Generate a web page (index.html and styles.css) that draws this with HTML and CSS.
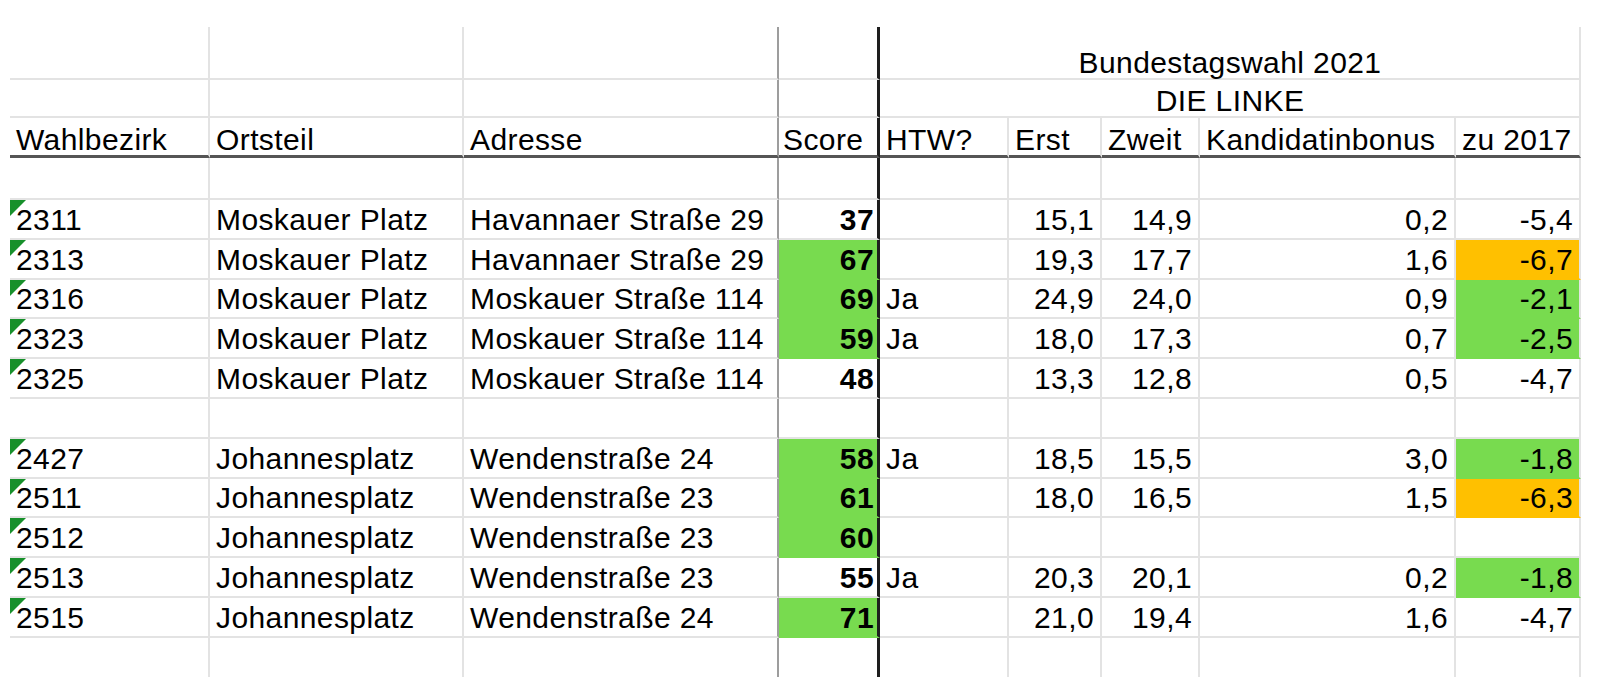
FILE: index.html
```html
<!DOCTYPE html>
<html lang="de">
<head>
<meta charset="utf-8">
<title>Bundestagswahl 2021 – DIE LINKE</title>
<link rel="stylesheet" href="styles.css">
</head>
<body>
<div class="sheet">
  <div class="row r1 top">
    <div class="c"></div><div class="c"></div><div class="c adr"></div><div class="c score"></div>
    <div class="c merged">Bundestagswahl 2021</div>
  </div>
  <div class="row r2 top">
    <div class="c"></div><div class="c"></div><div class="c adr"></div><div class="c score"></div>
    <div class="c merged">DIE LINKE</div>
  </div>
  <div class="row hdr top">
    <div class="c">Wahlbezirk</div><div class="c">Ortsteil</div><div class="c adr">Adresse</div><div class="c score sh">Score</div>
    <div class="c">HTW?</div><div class="c">Erst</div><div class="c">Zweit</div><div class="c">Kandidatinbonus</div><div class="c">zu 2017</div>
  </div>
  <div class="row">
    <div class="c"></div><div class="c"></div><div class="c adr"></div><div class="c score"></div>
    <div class="c"></div><div class="c"></div><div class="c"></div><div class="c"></div><div class="c"></div>
  </div>

  <div class="row">
    <div class="c id">2311</div><div class="c">Moskauer Platz</div><div class="c adr">Havannaer Straße 29</div><div class="c score">37</div>
    <div class="c"></div><div class="c n">15,1</div><div class="c n">14,9</div><div class="c n">0,2</div><div class="c n">-5,4</div>
  </div>
  <div class="row">
    <div class="c id">2313</div><div class="c">Moskauer Platz</div><div class="c adr">Havannaer Straße 29</div><div class="c score green">67</div>
    <div class="c"></div><div class="c n">19,3</div><div class="c n">17,7</div><div class="c n">1,6</div><div class="c n orange">-6,7</div>
  </div>
  <div class="row">
    <div class="c id">2316</div><div class="c">Moskauer Platz</div><div class="c adr">Moskauer Straße 114</div><div class="c score green">69</div>
    <div class="c">Ja</div><div class="c n">24,9</div><div class="c n">24,0</div><div class="c n">0,9</div><div class="c n green">-2,1</div>
  </div>
  <div class="row">
    <div class="c id">2323</div><div class="c">Moskauer Platz</div><div class="c adr">Moskauer Straße 114</div><div class="c score green">59</div>
    <div class="c">Ja</div><div class="c n">18,0</div><div class="c n">17,3</div><div class="c n">0,7</div><div class="c n green">-2,5</div>
  </div>
  <div class="row">
    <div class="c id">2325</div><div class="c">Moskauer Platz</div><div class="c adr">Moskauer Straße 114</div><div class="c score">48</div>
    <div class="c"></div><div class="c n">13,3</div><div class="c n">12,8</div><div class="c n">0,5</div><div class="c n">-4,7</div>
  </div>
  <div class="row">
    <div class="c"></div><div class="c"></div><div class="c adr"></div><div class="c score"></div>
    <div class="c"></div><div class="c"></div><div class="c"></div><div class="c"></div><div class="c"></div>
  </div>
  <div class="row">
    <div class="c id">2427</div><div class="c">Johannesplatz</div><div class="c adr">Wendenstraße 24</div><div class="c score green">58</div>
    <div class="c">Ja</div><div class="c n">18,5</div><div class="c n">15,5</div><div class="c n">3,0</div><div class="c n green">-1,8</div>
  </div>
  <div class="row">
    <div class="c id">2511</div><div class="c">Johannesplatz</div><div class="c adr">Wendenstraße 23</div><div class="c score green">61</div>
    <div class="c"></div><div class="c n">18,0</div><div class="c n">16,5</div><div class="c n">1,5</div><div class="c n orange">-6,3</div>
  </div>
  <div class="row">
    <div class="c id">2512</div><div class="c">Johannesplatz</div><div class="c adr">Wendenstraße 23</div><div class="c score green">60</div>
    <div class="c"></div><div class="c n"></div><div class="c n"></div><div class="c n"></div><div class="c n"></div>
  </div>
  <div class="row">
    <div class="c id">2513</div><div class="c">Johannesplatz</div><div class="c adr">Wendenstraße 23</div><div class="c score">55</div>
    <div class="c">Ja</div><div class="c n">20,3</div><div class="c n">20,1</div><div class="c n">0,2</div><div class="c n green">-1,8</div>
  </div>
  <div class="row">
    <div class="c id">2515</div><div class="c">Johannesplatz</div><div class="c adr">Wendenstraße 24</div><div class="c score green">71</div>
    <div class="c"></div><div class="c n">21,0</div><div class="c n">19,4</div><div class="c n">1,6</div><div class="c n">-4,7</div>
  </div>
  <div class="row last">
    <div class="c"></div><div class="c"></div><div class="c adr"></div><div class="c score"></div>
    <div class="c"></div><div class="c"></div><div class="c"></div><div class="c"></div><div class="c"></div>
  </div>
</div>
</body>
</html>
```

FILE: styles.css
```css
html, body {
  margin: 0;
  padding: 0;
  background: #ffffff;
}

body {
  padding: 27px 0 0 10px;
  font-family: "Liberation Sans", Arial, sans-serif;
  font-size: 30px;
  color: #000000;
  letter-spacing: 0.4px;
}

.sheet {
  display: grid;
  grid-template-columns: 200px 254px 315px 101px 129px 93px 98px 256px 125px;
  grid-template-rows: 53px 38px 40px 42px repeat(11, 39.8px) 39px;
  width: 1571px;
}

.row {
  display: contents;
}

.c {
  box-sizing: border-box;
  position: relative;
  display: flex;
  align-items: flex-end;
  justify-content: flex-start;
  padding: 0 5px 1px 6px;
  line-height: 34px;
  white-space: nowrap;
  border-right: 2px solid #e3e3e3;
  border-bottom: 2px solid #e3e3e3;
}

.top > .c {
  padding-bottom: 0;
  line-height: 31px;
}

.c.adr {
  border-right: 2px solid #9d9d9d;
}

.c.score {
  border-right: 3px solid #1e1e1e;
  justify-content: flex-end;
  font-weight: bold;
  padding-right: 3px;
}

.c.score.sh {
  justify-content: flex-start;
  font-weight: normal;
  padding-left: 4px;
}

.c.n {
  justify-content: flex-end;
  padding-right: 6px;
}

.c.merged {
  grid-column: span 5;
  justify-content: center;
}

.hdr > .c {
  border-bottom: 3px solid #555555;
}

.last > .c {
  border-bottom: none;
}

.c.green {
  background: #78db4f;
  border-bottom-color: #78db4f;
}

.c.orange {
  background: #ffc000;
  border-bottom-color: #ffc000;
}

.c.id::before {
  content: "";
  position: absolute;
  top: 0;
  left: 0;
  width: 0;
  height: 0;
  border-top: 16px solid #17902b;
  border-right: 16px solid transparent;
}
```
